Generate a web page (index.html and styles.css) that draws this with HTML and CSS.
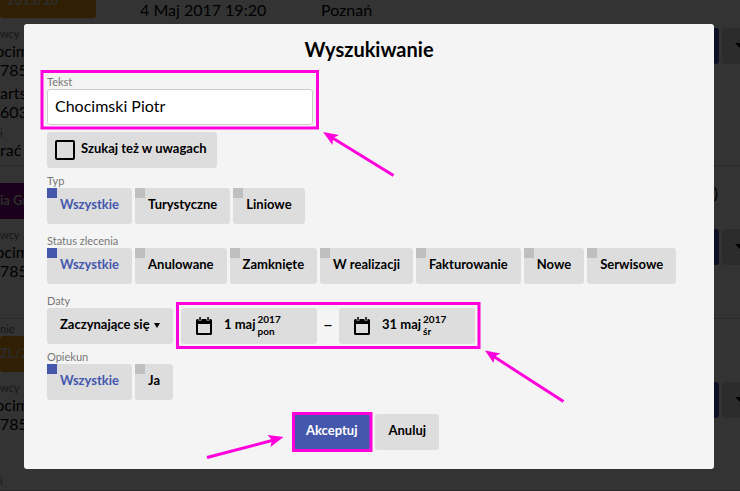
FILE: index.html
```html
<!DOCTYPE html>
<html lang="pl">
<head>
    <meta charset="UTF-8">
    <meta name="viewport" content="width=device-width, initial-scale=1.0">
    <title>Wyszukiwanie</title>
    <link rel="stylesheet" href="styles.css">
</head>
<body>
    <main class="orders">
        <section class="order first">
            <div class="order-head">
                <span class="tag orange wide">2015/26</span>
                <span class="when">4 Maj 2017 19:20</span>
                <span>Poznań</span>
            </div>
            <div class="order-body">
                <div class="client">
                    <small>wcy</small>
                    <p class="name">ocim</p>
                    <p>785</p>
                    <p class="second">arts</p>
                    <p>603</p>
                    <small class="note">i</small>
                    <p>rać</p>
                </div>
                <div class="actions">
                    <button class="main" aria-label="Otwórz"></button>
                    <button class="more" aria-label="Więcej"><span class="caret"></span></button>
                </div>
            </div>
        </section>
        <section class="order second-order">
            <div class="order-head">
                <span class="tag purple">ia Gr</span>
                <span class="paren">)</span>
            </div>
            <div class="order-body">
                <div class="client">
                    <small>wcy</small>
                    <p class="name">ocim</p>
                    <p>785</p>
                </div>
                <div class="actions">
                    <button class="main" aria-label="Otwórz"></button>
                    <button class="more" aria-label="Więcej"><span class="caret"></span></button>
                </div>
            </div>
        </section>
        <section class="order third-order">
            <small>nie</small>
            <div class="order-head">
                <span class="tag orange">ZL/2</span>
            </div>
            <div class="order-body">
                <div class="client">
                    <small>wcy</small>
                    <p class="name">ocim</p>
                    <p>785</p>
                    <small class="last">i</small>
                </div>
                <div class="actions">
                    <button class="main" aria-label="Otwórz"></button>
                    <button class="more" aria-label="Więcej"><span class="caret"></span></button>
                </div>
            </div>
        </section>
    </main>

    <div class="overlay">
        <form class="modal">
            <h1>Wyszukiwanie</h1>

            <div class="group">
                <label class="title" for="text">Tekst</label>
                <input class="text" type="text" id="text" value="Chocimski Piotr">
            </div>
            <label class="btn remarks">
                <input type="checkbox">
                <span>Szukaj też w uwagach</span>
            </label>

            <fieldset class="group">
                <legend class="title">Typ</legend>
                <div class="row">
                    <label class="btn toggle"><input type="checkbox" checked><span>Wszystkie</span></label>
                    <label class="btn toggle"><input type="checkbox"><span>Turystyczne</span></label>
                    <label class="btn toggle"><input type="checkbox"><span>Liniowe</span></label>
                </div>
            </fieldset>

            <fieldset class="group spaced">
                <legend class="title">Status zlecenia</legend>
                <div class="row">
                    <label class="btn toggle"><input type="checkbox" checked><span>Wszystkie</span></label>
                    <label class="btn toggle"><input type="checkbox"><span>Anulowane</span></label>
                    <label class="btn toggle"><input type="checkbox"><span>Zamknięte</span></label>
                    <label class="btn toggle"><input type="checkbox"><span>W realizacji</span></label>
                    <label class="btn toggle"><input type="checkbox"><span>Fakturowanie</span></label>
                    <label class="btn toggle"><input type="checkbox"><span>Nowe</span></label>
                    <label class="btn toggle"><input type="checkbox"><span>Serwisowe</span></label>
                </div>
            </fieldset>

            <div class="group spaced">
                <label class="title" for="dates">Daty</label>
                <div class="row dates">
                    <div class="select">
                        <select class="btn" id="dates">
                            <option>Zaczynające się</option>
                        </select>
                        <span class="caret"></span>
                    </div>
                    <button type="button" class="btn date">
                        <svg width="16" height="19" viewBox="0 0 16 19">
                            <path fill-rule="evenodd" d="M1.5 2H14.5Q16 2 16 3.5V16.5Q16 18 14.5 18H1.5Q0 18 0 16.5V3.5Q0 2 1.5 2ZM2 7V16H14V7Z"/>
                            <path d="M2.5 0h3v3.5h-3zM10.5 0h3v3.5h-3z" fill="#ddd"/>
                            <path d="M3.3 0h1.5v3h-1.5zM11.3 0h1.5v3h-1.5z"/>
                        </svg>
                        <span class="day">1 maj</span>
                        <span class="year">2017<br>pon</span>
                    </button>
                    <span class="dash">–</span>
                    <button type="button" class="btn date">
                        <svg width="16" height="19" viewBox="0 0 16 19">
                            <path fill-rule="evenodd" d="M1.5 2H14.5Q16 2 16 3.5V16.5Q16 18 14.5 18H1.5Q0 18 0 16.5V3.5Q0 2 1.5 2ZM2 7V16H14V7Z"/>
                            <path d="M2.5 0h3v3.5h-3zM10.5 0h3v3.5h-3z" fill="#ddd"/>
                            <path d="M3.3 0h1.5v3h-1.5zM11.3 0h1.5v3h-1.5z"/>
                        </svg>
                        <span class="day">31 maj</span>
                        <span class="year">2017<br>śr</span>
                    </button>
                </div>
            </div>

            <fieldset class="group">
                <legend class="title">Opiekun</legend>
                <div class="row">
                    <label class="btn toggle"><input type="checkbox" checked><span>Wszystkie</span></label>
                    <label class="btn toggle"><input type="checkbox"><span>Ja</span></label>
                </div>
            </fieldset>

            <div class="buttons">
                <button type="submit" class="btn primary">Akceptuj</button>
                <button type="button" class="btn">Anuluj</button>
            </div>

            <!-- hint frames and arrows -->
            <svg class="hints" width="690" height="445" viewBox="24 24 690 445">
                <g fill="none" stroke="#ff00dc" stroke-width="3">
                    <rect x="42" y="71.5" width="275.5" height="56.5"/>
                    <rect x="177.5" y="303.5" width="301.5" height="44"/>
                    <rect x="293.5" y="413.5" width="77.5" height="37"/>
                    <path d="M393.5 175.5L331 137M563.5 401.5L493 356M207 457.5L274 440"/>
                </g>
                <g fill="#ff00dc">
                    <path d="M323 132L339 135L333 138L332.5 145Z"/>
                    <path d="M485 350.5L500.5 353.5L494.5 356.5L493.5 363Z"/>
                    <path d="M283.5 437L267.5 435L272 440L270.5 447Z"/>
                </g>
            </svg>
        </form>
    </div>
</body>
</html>
```
FILE: styles.css
```css
* {
    box-sizing: border-box;
}
body {
    margin: 0;
    min-height: 100vh;
    overflow: hidden;
    background: #fff;
    color: #000;
    font-family: Lato, sans-serif;
    font-size: 16px;
    line-height: 19px;
}
p {
    margin: 0;
}
button, input, select {
    font-family: inherit;
    border: none;
}
.caret {
    border: 4px solid transparent;
    border-top: 5px solid #000;
    border-bottom: none;
}

/* order list behind the dialog */
.orders {
    height: 100vh;
    overflow: hidden;
}
.order {
    border-bottom: 1px solid #ccc;
}
.order small {
    display: block;
    font-size: 11px;
    line-height: 14px;
    color: #777;
}
.order-head, .order-body {
    display: flex;
}
.first {
    margin-top: -18px;
    padding-bottom: 6px;
}
.order-head {
    align-items: flex-start;
}
.first .order-head {
    align-items: flex-end;
    line-height: 17px;
}
.tag {
    height: 36px;
    width: 96px;
    line-height: 34px;
    border-radius: 3px;
    color: #ddd;
    font-size: 13px;
    font-weight: bold;
}
.orange {
    background: #f39c12;
}
.purple {
    background: #800080;
    border-radius: 0;
}
.first .tag {
    line-height: 36px;
}
.wide {
    padding-left: 7px;
}
.when {
    width: 181px;
    margin-left: 44px;
}
.first .order-head span {
    flex-shrink: 0;
}
.order-body {
    justify-content: space-between;
    padding-top: 9px;
}
.client {
    width: 29px;
}
.name {
    display: flex;
    justify-content: flex-end;
}
.second {
    margin-top: 4px;
}
.note {
    margin-top: 5px;
}
.last {
    margin-top: 41px;
}
.actions {
    display: flex;
    gap: 3px;
    padding-top: 1px;
}
.actions button {
    height: 36px;
    border-radius: 3px;
}
.main {
    width: 80px;
    background: #4557ad;
}
.more {
    width: 18px;
    padding: 0 0 0 13px;
    overflow: hidden;
    background: #ddd;
}
.actions .more {
    border-radius: 3px 0 0 3px;
}
.more .caret {
    display: block;
    width: 12px;
    border-width: 6px 6px 0;
}
.second-order {
    padding: 17px 0 38px;
}
.second-order .order-head {
    justify-content: space-between;
}
.paren {
    margin-right: 22px;
}
.third-order {
    padding: 3px 0 2px;
}

/* dialog */
.overlay {
    position: fixed;
    inset: 0;
    padding: 24px 26px 22px 24px;
    background: rgba(0, 0, 0, 0.8);
}
.modal {
    position: relative;
    padding: 13px 23px 19px;
    border-radius: 3px;
    background: #f4f4f4;
}
h1 {
    margin: 0 0 14px;
    text-align: center;
    font-size: 20px;
    line-height: 24px;
}
.group {
    margin: 6px 0 0;
    padding: 0;
    border: none;
}
.spaced {
    margin-top: 10px;
}
.title {
    display: block;
    padding: 0;
    color: #777;
    font-size: 11px;
    line-height: 14px;
}
.text {
    display: block;
    width: 266px;
    height: 36px;
    margin-bottom: 7px;
    padding: 0 7px 3px;
    border: 1px solid #ccc;
    border-radius: 3px;
    background: #fff;
    color: #000;
    font-size: 16px;
}
.row {
    display: flex;
    flex-wrap: wrap;
    gap: 3px;
}
.btn {
    height: 36px;
    padding: 0 13px 4px;
    border-radius: 3px;
    background: #ddd;
    color: #000;
    font-size: 13px;
    font-weight: bold;
    line-height: 32px;
    cursor: pointer;
}
.toggle {
    position: relative;
}
.toggle input {
    appearance: none;
    position: absolute;
    top: 0;
    left: 0;
    width: 10px;
    height: 10px;
    margin: 0;
    background: #bfbfbf;
}
.toggle input:checked {
    background: #4557ad;
}
.toggle input:checked + span {
    color: #4557ad;
}
.remarks {
    display: flex;
    gap: 6px;
    width: fit-content;
    padding: 0 10px 4px 8px;
}
.remarks input {
    appearance: none;
    width: 20px;
    height: 20px;
    margin: 8px 0 0;
    border: 2px solid #000;
    border-radius: 2px;
}
.dates {
    gap: 0;
}
.select {
    position: relative;
    margin-right: 8px;
}
.select .btn {
    appearance: none;
    display: block;
    padding-right: 23px;
}
.select .caret {
    position: absolute;
    top: 15px;
    right: 13px;
    border-width: 5px 3px 0;
    pointer-events: none;
}
.date {
    display: flex;
    align-items: center;
    min-width: 136px;
    padding: 0 15px;
}
.day {
    padding: 0 2px 4px 12px;
}
.year {
    font-size: 10px;
    line-height: 12px;
    padding-bottom: 2px;
    text-align: left;
}
.dash {
    width: 22px;
    text-align: center;
    font-size: 18px;
    line-height: 32px;
}
.buttons {
    display: flex;
    justify-content: center;
    gap: 5px;
    margin-top: 14px;
    padding-right: 6px;
}
.primary {
    background: #4557ad;
    color: #fff;
}
.hints {
    position: absolute;
    top: 0;
    left: 0;
    pointer-events: none;
}
```
